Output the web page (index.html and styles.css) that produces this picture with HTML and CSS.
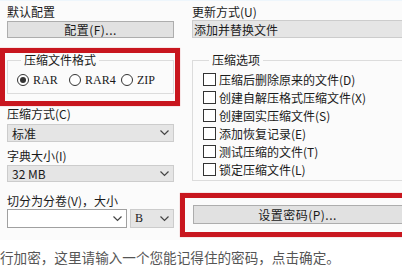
FILE: index.html
```html
<!DOCTYPE html>
<html lang="zh-CN">
<head>
  <meta charset="UTF-8">
  <title>压缩文件名和参数</title>
  <link rel="stylesheet" href="styles.css">
</head>
<body>
  <div class="dialog">
    <!-- 左栏 -->
    <div class="col col-left">
      <div class="label first">默认配置</div>
      <div class="btn btn-config">配置(F)...</div>

      <fieldset class="group group-format">
        <legend>压缩文件格式</legend>
        <div class="radios">
          <span class="radio checked"></span><span class="radio-text">RAR</span>
          <span class="radio"></span><span class="radio-text">RAR4</span>
          <span class="radio"></span><span class="radio-text">ZIP</span>
        </div>
      </fieldset>

      <div class="label l-method">压缩方式(C)</div>
      <div class="select s-method">
        <span>标准</span>
        <svg class="chev" width="9" height="6" viewBox="0 0 9 6"><polyline points="0.5,0.5 4.5,4.5 8.5,0.5" fill="none" stroke="#444" stroke-width="1.2"/></svg>
      </div>

      <div class="label l-dict">字典大小(I)</div>
      <div class="select s-dict">
        <span>32 MB</span>
        <svg class="chev" width="9" height="6" viewBox="0 0 9 6"><polyline points="0.5,0.5 4.5,4.5 8.5,0.5" fill="none" stroke="#444" stroke-width="1.2"/></svg>
      </div>

      <div class="label l-split">切分为分卷(V)，大小</div>
      <div class="split-row">
        <div class="input-combo">
          <svg class="chev" width="9" height="6" viewBox="0 0 9 6"><polyline points="0.5,0.5 4.5,4.5 8.5,0.5" fill="none" stroke="#444" stroke-width="1.2"/></svg>
        </div>
        <div class="select s-unit">
          <span>B</span>
          <svg class="chev" width="9" height="6" viewBox="0 0 9 6"><polyline points="0.5,0.5 4.5,4.5 8.5,0.5" fill="none" stroke="#444" stroke-width="1.2"/></svg>
        </div>
      </div>
    </div>

    <!-- 右栏 -->
    <div class="col col-right">
      <div class="label first">更新方式(U)</div>
      <div class="select s-update">
        <span>添加并替换文件</span>
        <svg class="chev" width="9" height="6" viewBox="0 0 9 6"><polyline points="0.5,0.5 4.5,4.5 8.5,0.5" fill="none" stroke="#444" stroke-width="1.2"/></svg>
      </div>

      <fieldset class="group group-options">
        <legend>压缩选项</legend>
        <div class="check-row"><span class="check"></span>压缩后删除原来的文件(D)</div>
        <div class="check-row"><span class="check"></span>创建自解压格式压缩文件(X)</div>
        <div class="check-row"><span class="check"></span>创建固实压缩文件(S)</div>
        <div class="check-row"><span class="check"></span>添加恢复记录(E)</div>
        <div class="check-row"><span class="check"></span>测试压缩的文件(T)</div>
        <div class="check-row"><span class="check"></span>锁定压缩文件(L)</div>
      </fieldset>

      <div class="btn btn-password">设置密码(P)...</div>
    </div>

    <!-- 红框标注 -->
    <div class="mark mark-format"></div>
    <div class="mark mark-password"></div>
  </div>

  <p class="hint">行加密，这里请输入一个您能记得住的密码，点击确定。</p>
</body>
</html>
```

FILE: styles.css
```css
body {
  margin: 0;
  width: 402px;
  height: 266px;
  overflow: hidden;
  background: #ffffff;
  font-family: "Noto Sans CJK SC", "Noto Sans", sans-serif;
  font-size: 12px;
  color: #1a1a1a;
}
.dialog {
  position: relative;
  display: grid;
  grid-template-columns: 167px 230px;
  column-gap: 18px;
  padding: 3px 0 0 7px;
  height: 240px;
  box-sizing: border-box;
  background: #fbfbfb;
  border-top: 1px solid #eef6fc;
}
.col {
  display: flex;
  flex-direction: column;
}
.label {
  height: 16px;
  line-height: 16px;
  white-space: nowrap;
}
.btn {
  background: #e1e1e1;
  border: 1px solid #adadad;
  box-sizing: border-box;
  text-align: center;
  white-space: nowrap;
}
.btn-config {
  margin-top: 1px;
  height: 17px;
  line-height: 15px;
  letter-spacing: 0.5px;
}
.select {
  display: flex;
  align-items: center;
  justify-content: space-between;
  background: #e5e5e5;
  border: 1px solid #cccccc;
  box-sizing: border-box;
  padding: 0 4px;
  white-space: nowrap;
}
.s-update {
  height: 18px;
  padding-left: 1px;
}
.s-method {
  margin-top: 2px;
  height: 18px;
}
.s-dict {
  margin-top: 1px;
  height: 17px;
}
.chev {
  flex: none;
}
/* 分组框 */
.group {
  margin: 0;
  padding: 0;
  border: 1px solid #dcdcdc;
  box-sizing: border-box;
}
.group legend {
  padding: 0 3px;
  line-height: 14px;
  height: 14px;
}
.group-format {
  margin-top: 15px;
  height: 41px;
  width: 161px;
  padding-left: 9px;
}
.group-format legend {
  margin-left: 4px;
}
.radios {
  display: flex;
  align-items: center;
  margin-top: 6px;
  height: 14px;
}
.radio {
  width: 10px;
  height: 10px;
  border: 1px solid #333333;
  border-radius: 50%;
  background: #ffffff;
  display: flex;
  align-items: center;
  justify-content: center;
  flex: none;
}
.radio.checked::after {
  content: "";
  width: 6px;
  height: 6px;
  border-radius: 50%;
  background: #333333;
}
.radio-text {
  margin-left: 4px;
  width: 36px;
  font-family: "Liberation Serif", "Noto Sans CJK SC", serif;
  font-size: 12px;
}
.l-method {
  margin-top: 12px;
}
.l-dict {
  margin-top: 6px;
}
.l-split {
  margin-top: 11px;
}
.split-row {
  display: flex;
  gap: 3px;
}
.input-combo {
  width: 120px;
  height: 19px;
  box-sizing: border-box;
  background: #ffffff;
  border: 1px solid #a0a0a0;
  display: flex;
  align-items: center;
  justify-content: flex-end;
  padding-right: 4px;
}
.s-unit {
  width: 44px;
  height: 19px;
  font-family: "Liberation Serif", serif;
}
.group-options {
  margin-top: 15px;
  height: 128px;
  padding-left: 10px;
}
.group-options legend {
  margin-left: 6px;
}
.check-row {
  display: flex;
  align-items: center;
  height: 18px;
  white-space: nowrap;
}
.check-row:first-of-type {
  margin-top: 3px;
}
.check {
  width: 11px;
  height: 11px;
  border: 1px solid #333333;
  background: #ffffff;
  margin-right: 3px;
  flex: none;
}
.btn-password {
  margin-top: 24px;
  margin-left: 1px;
  height: 19px;
  line-height: 17px;
  padding-right: 20px;
  letter-spacing: 0.5px;
}
/* 红框标注 */
.mark {
  position: absolute;
  border: 5px solid #c8161e;
  box-shadow: 0 0 1px #e88a8e;
  box-sizing: border-box;
}
.mark-format {
  left: 0;
  top: 47px;
  width: 180px;
  height: 58px;
}
.mark-password {
  left: 180px;
  top: 192px;
  width: 240px;
  height: 44px;
}
.hint {
  margin: 9px 0 0 0;
  font-size: 13.6px;
  line-height: 16px;
  color: #555555;
  white-space: nowrap;
}
```
